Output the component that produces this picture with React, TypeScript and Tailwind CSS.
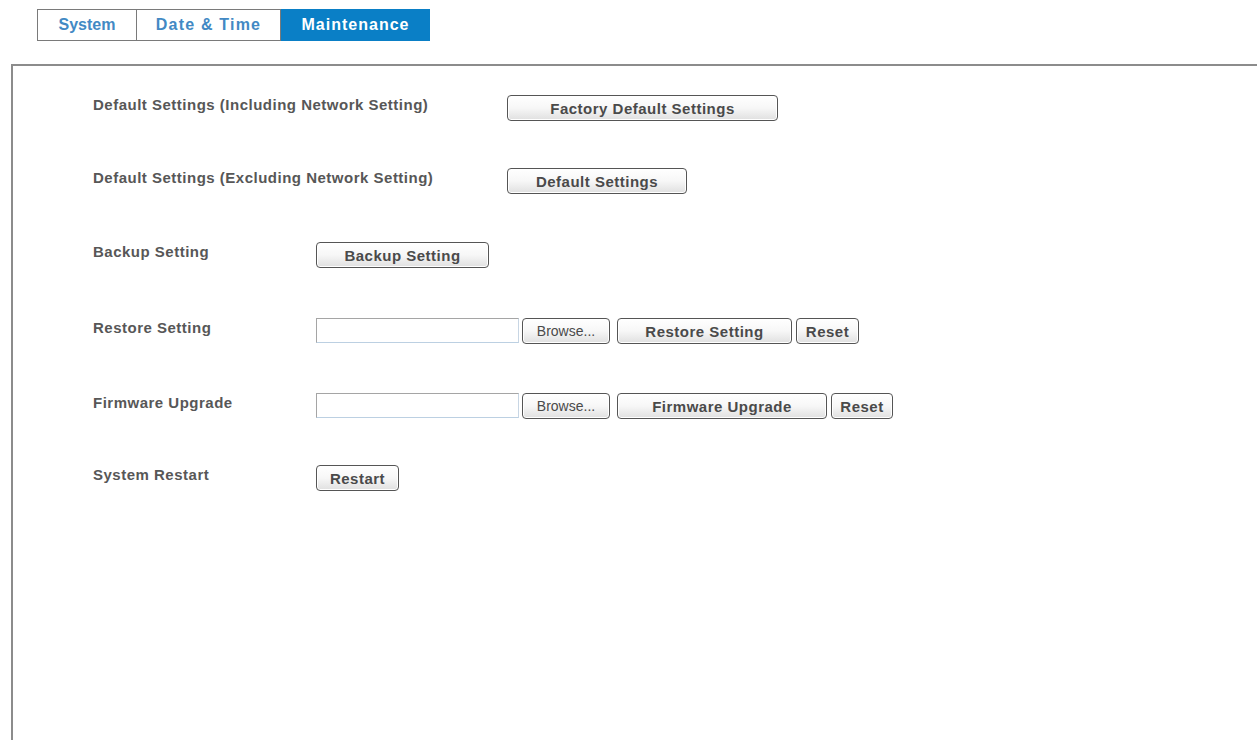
import React from "react";

const font = { fontFamily: '"Liberation Sans", Arial, sans-serif' };

function Btn({ w, children, bold = true, small = false }: { w: string; children: React.ReactNode; bold?: boolean; small?: boolean }) {
  return (
    <button
      className={`${w} h-[26px] shrink-0 rounded-[4px] border border-[#555555] bg-gradient-to-b from-[#ffffff] via-[#f7f7f7] to-[#e0e0e0] text-[#4a4a4a] shadow-[inset_0_0_0_1px_#fff] ${bold ? "font-bold text-[15px] tracking-[0.5px]" : "font-normal text-[14px]"} leading-none`}
    >
      {children}
    </button>
  );
}

function FileInput() {
  return (
    <div className="h-[25px] w-[203px] shrink-0 border border-[#a5a5a5] border-b-[#bcd0e2] border-r-[#c8d6e4] bg-white" />
  );
}

function Label({ w, children }: { w: string; children: React.ReactNode }) {
  return (
    <div className={`${w} mt-[2px] shrink-0 text-[15px] font-bold leading-[16px] tracking-[0.5px] text-[#575757]`}>{children}</div>
  );
}

export default function App() {
  return (
    <div className="min-h-[740px] w-[1257px] overflow-hidden bg-white" style={font}>
      <div className="flex pl-[37px] pt-[9px]">
        <div className="flex h-[32px] w-[100px] items-center justify-center border border-[#7a7a7a] text-[16px] font-bold text-[#4289c4]">
          System
        </div>
        <div className="flex h-[32px] w-[144px] items-center justify-center border border-l-0 border-[#7a7a7a] text-[16px] font-bold tracking-[1.2px] text-[#4289c4]">
          Date &amp; Time
        </div>
        <div className="flex h-[32px] w-[149px] items-center justify-center bg-[#0a7fc6] text-[16px] font-bold tracking-[1px] text-white">
          Maintenance
        </div>
      </div>

      <div className="ml-[11px] mt-[23px] h-[700px] border-l-2 border-t-2 border-[#8c8c8c] pl-[80px] pt-[29px]">
        <div className="flex h-[73px] items-start">
          <Label w="w-[414px]">Default Settings (Including Network Setting)</Label>
          <Btn w="w-[271px]">Factory Default Settings</Btn>
        </div>
        <div className="flex h-[74px] items-start">
          <Label w="w-[414px]">Default Settings (Excluding Network Setting)</Label>
          <Btn w="w-[180px]">Default Settings</Btn>
        </div>
        <div className="flex h-[76px] items-start">
          <Label w="w-[223px]">Backup Setting</Label>
          <Btn w="w-[173px]">Backup Setting</Btn>
        </div>
        <div className="flex h-[75px] items-start">
          <Label w="w-[223px]">Restore Setting</Label>
          <div className="flex items-start">
            <FileInput />
            <div className="ml-[3px]">
              <Btn w="w-[88px]" bold={false} small>
                Browse...
              </Btn>
            </div>
            <div className="ml-[7px]">
              <Btn w="w-[175px]">Restore Setting</Btn>
            </div>
            <div className="ml-[4px]">
              <Btn w="w-[63px]">Reset</Btn>
            </div>
          </div>
        </div>
        <div className="flex h-[72px] items-start">
          <Label w="w-[223px]">Firmware Upgrade</Label>
          <div className="flex items-start">
            <FileInput />
            <div className="ml-[3px]">
              <Btn w="w-[88px]" bold={false} small>
                Browse...
              </Btn>
            </div>
            <div className="ml-[7px]">
              <Btn w="w-[210px]">Firmware Upgrade</Btn>
            </div>
            <div className="ml-[4px]">
              <Btn w="w-[62px]">Reset</Btn>
            </div>
          </div>
        </div>
        <div className="flex h-[72px] items-start">
          <Label w="w-[223px]">System Restart</Label>
          <Btn w="w-[83px]">Restart</Btn>
        </div>
      </div>
    </div>
  );
}
